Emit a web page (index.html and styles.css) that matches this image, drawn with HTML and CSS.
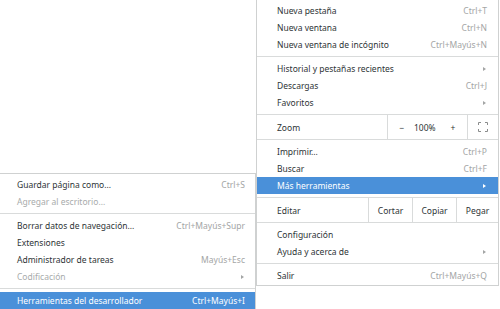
FILE: index.html
```html
<!DOCTYPE html>
<html lang="es">
<head>
    <meta charset="UTF-8">
    <meta name="viewport" content="width=device-width, initial-scale=1.0">
    <title>Menú del navegador</title>
    <link rel="stylesheet" href="styles.css">
</head>
<body>
    <!-- Main menu -->
    <div class="menu main-menu">
        <div class="item"><span class="label">Nueva pestaña</span><span class="accel">Ctrl+T</span></div>
        <div class="item"><span class="label">Nueva ventana</span><span class="accel">Ctrl+N</span></div>
        <div class="item"><span class="label">Nueva ventana de incógnito</span><span class="accel">Ctrl+Mayús+N</span></div>
        <div class="sep"></div>
        <div class="item"><span class="label">Historial y pestañas recientes</span><span class="arrow"></span></div>
        <div class="item"><span class="label">Descargas</span><span class="accel">Ctrl+J</span></div>
        <div class="item"><span class="label">Favoritos</span><span class="arrow"></span></div>

        <div class="group">
            <div class="group-row">
                <span class="group-label">Zoom</span>
                <div class="cell zoom-ctl">
                    <span class="z-minus">−</span>
                    <span class="z-value">100%</span>
                    <span class="z-plus">+</span>
                </div>
                <div class="cell fs-cell">
                    <svg width="10" height="10" viewBox="0 0 10 10">
                        <path d="M0.5 3V0.5H3M7 0.5H9.5V3M9.5 7V9.5H7M3 9.5H0.5V7" fill="none" stroke="#8a8c8c" stroke-width="1"/>
                    </svg>
                </div>
            </div>
        </div>

        <div class="item"><span class="label">Imprimir...</span><span class="accel">Ctrl+P</span></div>
        <div class="item"><span class="label">Buscar</span><span class="accel">Ctrl+F</span></div>
        <div class="item active"><span class="label">Más herramientas</span><span class="arrow"></span></div>

        <div class="group">
            <div class="group-row">
                <span class="group-label">Editar</span>
                <div class="cell edit-cell">Cortar</div>
                <div class="cell edit-cell">Copiar</div>
                <div class="cell edit-cell last">Pegar</div>
            </div>
        </div>

        <div class="item"><span class="label">Configuración</span></div>
        <div class="item"><span class="label">Ayuda y acerca de</span><span class="arrow"></span></div>
        <div class="sep"></div>
        <div class="item"><span class="label">Salir</span><span class="accel">Ctrl+Mayús+Q</span></div>
    </div>

    <!-- "Más herramientas" submenu -->
    <div class="menu sub-menu">
        <div class="item"><span class="label">Guardar página como...</span><span class="accel">Ctrl+S</span></div>
        <div class="item disabled"><span class="label">Agregar al escritorio...</span></div>
        <div class="sep"></div>
        <div class="item"><span class="label">Borrar datos de navegación...</span><span class="accel">Ctrl+Mayús+Supr</span></div>
        <div class="item"><span class="label">Extensiones</span></div>
        <div class="item"><span class="label">Administrador de tareas</span><span class="accel">Mayús+Esc</span></div>
        <div class="item disabled"><span class="label">Codificación</span><span class="arrow"></span></div>
        <div class="sep"></div>
        <div class="item active"><span class="label">Herramientas del desarrollador</span><span class="accel">Ctrl+Mayús+I</span></div>
    </div>
</body>
</html>
```

FILE: styles.css
```css
/* Basic Reset */
* {
    box-sizing: border-box;
    margin: 0;
    padding: 0;
}

body {
    width: 500px;
    height: 309px;
    overflow: hidden;
    position: relative;
    background-color: #fff;
    font-family: "Noto Sans", "Open Sans", sans-serif;
    font-size: 8.5px;
    color: #2e3436;
}

/* Popup menus (windows over the page) */
.menu {
    position: absolute;
    background-color: #fff;
    border: 1px solid #cfd1d1;
}

.main-menu {
    left: 256px;
    top: -1px;
    width: 243px;
    padding: 2px 0 1px;
}

.sub-menu {
    left: -1px;
    top: 173px;
    width: 257px;
    padding-top: 2px;
    z-index: 2;
}

/* Rows */
.item {
    display: flex;
    align-items: center;
    height: 17px;
    padding: 0 11px 0 20px;
    white-space: nowrap;
}

.sub-menu .item {
    padding: 0 10px 0 17px;
}

.item .label {
    flex: 1;
}

.accel {
    color: #a3a5a5;
}

.arrow {
    width: 0;
    height: 0;
    margin-right: 1px;
    border-top: 2.5px solid transparent;
    border-bottom: 2.5px solid transparent;
    border-left: 3px solid #a3a5a5;
}

.item.active {
    background-color: #4a90d9;
    color: #fff;
}

.item.active .accel {
    color: #fff;
}

.item.active .arrow {
    border-left-color: #fff;
}

.item.disabled {
    color: #a8abab;
}

.sep {
    height: 7px;
    padding-top: 3px;
}

.sep::before {
    content: "";
    display: block;
    height: 1px;
    background-color: #d9dbdb;
}

/* Zoom / edit button rows */
.group {
    padding: 3px 0;
}

.group-row {
    display: flex;
    height: 26px;
    border-top: 1px solid #d9dbdb;
    border-bottom: 1px solid #d9dbdb;
}

.group-label {
    flex: 1;
    display: flex;
    align-items: center;
    padding-left: 20px;
}

.cell {
    display: flex;
    align-items: center;
    justify-content: center;
    border-left: 1px solid #d9dbdb;
}

.zoom-ctl {
    width: 80px;
    justify-content: flex-start;
}

.z-minus {
    width: 26px;
    text-align: center;
    padding-left: 2px;
}

.z-value {
    width: 20px;
    text-align: center;
}

.z-plus {
    width: 33px;
    text-align: center;
    padding-left: 5px;
}

.fs-cell {
    width: 31px;
}

.edit-cell {
    width: 44px;
}

.edit-cell.last {
    width: 42px;
}
```
